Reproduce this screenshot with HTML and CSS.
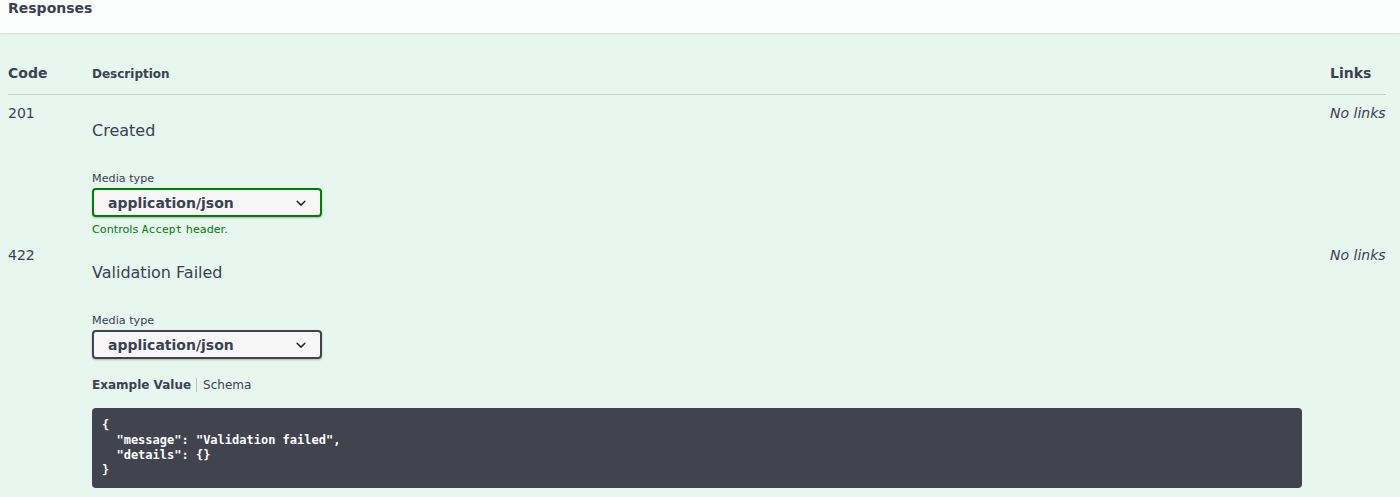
FILE: index.html
```html
<!DOCTYPE html>
<html lang="en">
<head>
<meta charset="utf-8">
<title>Responses</title>
<link rel="stylesheet" href="styles.css">
</head>
<body>
<div class="opblock">
  <div class="section-header">
    <h4 class="section-title">Responses</h4>
  </div>
  <div class="responses-inner">
    <div class="table-head">
      <div class="col-status head">Code</div>
      <div class="col-desc head-small">Description</div>
      <div class="col-links head">Links</div>
    </div>

    <div class="response-row">
      <div class="col-status cell-code">201</div>
      <div class="col-desc cell-desc">
        <p class="desc-text">Created</p>
        <div class="media-type">
          <div class="media-title">Media type</div>
          <div class="select select-accept">
            <span class="select-value">application/json</span>
            <svg class="select-arrow" viewBox="0 0 20 20" width="20" height="20"><path d="M13.418 7.859a.695.695 0 0 1 .978 0 .68.68 0 0 1 0 .969l-3.908 3.83a.697.697 0 0 1-.979 0l-3.908-3.830a.68.68 0 0 1 0-.969.695.695 0 0 1 .978 0L10 11l3.418-3.141z"/></svg>
          </div>
          <div class="accept-message">Controls <code class="accept-code">Accept</code> header.</div>
        </div>
      </div>
      <div class="col-links cell-links"><i>No links</i></div>
    </div>

    <div class="response-row">
      <div class="col-status cell-code">422</div>
      <div class="col-desc cell-desc">
        <p class="desc-text">Validation Failed</p>
        <div class="media-type">
          <div class="media-title">Media type</div>
          <div class="select">
            <span class="select-value">application/json</span>
            <svg class="select-arrow" viewBox="0 0 20 20" width="20" height="20"><path d="M13.418 7.859a.695.695 0 0 1 .978 0 .68.68 0 0 1 0 .969l-3.908 3.83a.697.697 0 0 1-.979 0l-3.908-3.830a.68.68 0 0 1 0-.969.695.695 0 0 1 .978 0L10 11l3.418-3.141z"/></svg>
          </div>
        </div>
        <ul class="tabs">
          <li class="tab tab-first tab-active">Example Value</li>
          <li class="tab">Schema</li>
        </ul>
        <pre class="example">{
  "message": "Validation failed",
  "details": {}
}</pre>
      </div>
      <div class="col-links cell-links"><i>No links</i></div>
    </div>
  </div>
</div>
</body>
</html>
```

FILE: styles.css
```css
html, body {
  margin: 0;
  padding: 0;
}

body {
  background: #e7f6ef;
  font-family: "DejaVu Sans", sans-serif;
  color: #3b4151;
  height: 497px;
  overflow: hidden;
}

.opblock {
  background: #e7f6ef;
  min-height: 497px;
}

.section-header {
  height: 33px;
  background: #fcfefd;
  box-shadow: 0 1px 2px rgba(0, 0, 0, 0.1);
  padding: 0 8px;
  box-sizing: border-box;
  position: relative;
}

.section-title {
  margin: 0;
  font-size: 14px;
  font-weight: 700;
  line-height: 16px;
  color: #3b4151;
}

.responses-inner {
  padding: 20px 14px 0 8px;
}

.table-head,
.response-row {
  display: grid;
  grid-template-columns: 84px 1210px 1fr;
}

.table-head {
  align-items: baseline;
  padding: 12px 0;
  border-bottom: 1px solid rgba(59, 65, 81, 0.2);
  line-height: 16px;
}

.head {
  font-size: 14px;
  font-weight: 700;
}

.head-small {
  font-size: 12px;
  font-weight: 700;
}

.col-links {
  padding-left: 28px;
}

.response-row {
  align-items: start;
}

.cell-code,
.cell-links {
  padding-top: 10px;
  font-size: 14px;
  line-height: 16px;
}

.cell-desc {
  padding: 10px 0 1px;
}

.desc-text {
  margin: 16px 0 0;
  font-size: 16px;
  line-height: 20px;
}

.media-type {
  margin-top: 31px;
}

.media-title {
  font-size: 11.2px;
  line-height: 13px;
  margin-bottom: 3px;
}

.select {
  width: 230px;
  height: 29px;
  box-sizing: border-box;
  display: flex;
  align-items: center;
  padding: 0 9px 0 14px;
  border: 2px solid #41444e;
  border-radius: 4px;
  background: #f7f7f7;
  box-shadow: 0 1px 2px 0 rgba(0, 0, 0, 0.25);
  font-size: 14px;
  font-weight: 700;
  line-height: 16px;
  color: #3b4151;
}

.select-accept {
  border-color: #008000;
}

.select-value {
  flex: 1;
}

.select-arrow {
  flex: none;
  fill: #222;
}

.accept-message {
  margin-top: 6px;
  font-size: 11.2px;
  line-height: 13px;
  color: #008000;
}

.accept-code {
  font-family: "DejaVu Sans Mono", monospace;
  font-size: inherit;
}

.tabs {
  list-style: none;
  margin: 19px 0 0;
  padding: 0;
  display: flex;
}

.tab {
  font-size: 12px;
  line-height: 14px;
  color: #3b4151;
}

.tab-first {
  position: relative;
  padding-right: 12px;
}

.tab-first::after {
  content: "";
  position: absolute;
  right: 6px;
  top: 0;
  width: 1px;
  height: 100%;
  background: rgba(0, 0, 0, 0.2);
}

.tab-active {
  font-weight: 700;
}

.example {
  margin: 16px 0 0;
  padding: 10px;
  background: #41444e;
  border-radius: 4px;
  color: #ffffff;
  font-family: "DejaVu Sans Mono", monospace;
  font-size: 12px;
  font-weight: 700;
  line-height: 15px;
  white-space: pre;
}
```
